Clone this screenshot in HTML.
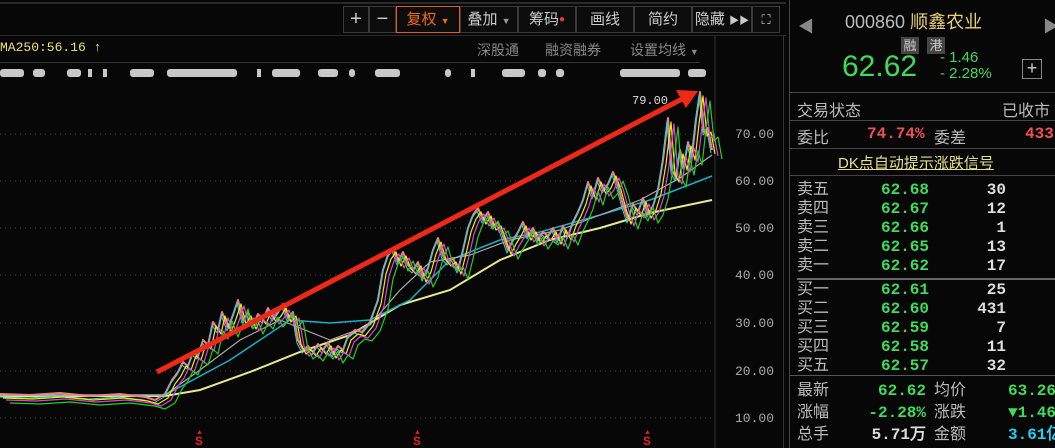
<!DOCTYPE html>
<html><head><meta charset="utf-8"><style>
*{margin:0;padding:0;box-sizing:border-box}
body{width:1055px;height:448px;background:#070707;overflow:hidden;position:relative;font-family:"Liberation Sans","Noto Sans CJK SC",sans-serif;color:#ccc}
.a{position:absolute;white-space:nowrap}
.btn{position:absolute;top:6px;height:27px;border:1px solid #3a3a3a;color:#ccc;font-size:15px;line-height:25px;text-align:center;background:#0c0c0c}
.r{position:absolute;left:797px;font-size:16px;color:#bbb}
.g{color:#3ddc5a;font-family:"Liberation Mono",monospace;font-weight:bold;font-size:16px}
.n{color:#ddd;font-family:"Liberation Mono",monospace;font-weight:bold;font-size:16px}
.ax{position:absolute;left:735px;color:#aaa;font-family:"Liberation Mono",monospace;font-size:13px}
</style></head><body>
<div class="a" style="left:0;top:2px;width:786px;height:2px;background:#2a2a2a"></div>
<div class="btn" style="left:343px;width:26px;font-size:20px">+</div>
<div class="btn" style="left:369px;width:27px;font-size:20px">−</div>
<div class="btn" style="left:396px;width:64px;border-color:#e06010;color:#f06a10">复权 <span style="font-size:9px">▼</span></div>
<div class="btn" style="left:460px;width:58px">叠加 <span style="font-size:9px;color:#999">▼</span></div>
<div class="btn" style="left:518px;width:58px">筹码<span style="color:#f33;font-size:10px;vertical-align:top">●</span></div>
<div class="btn" style="left:576px;width:58px">画线</div>
<div class="btn" style="left:634px;width:58px">简约</div>
<div class="btn" style="left:692px;width:60px">隐藏 <span style="font-size:10px">▶▶</span></div>
<div class="btn" style="left:752px;width:28px;font-size:13px">⛶</div>
<div class="a" style="left:0;top:35px;width:786px;height:1px;background:#2a2a2a"></div>
<div class="a" style="left:0;top:40px;font-family:'Liberation Mono',monospace;font-size:13px;color:#f0e070">MA250:56.16 <span>↑</span></div>
<div class="a" style="left:477px;top:40px;font-size:14px;color:#888">深股通</div>
<div class="a" style="left:545px;top:40px;font-size:14px;color:#888">融资融券</div>
<div class="a" style="left:630px;top:40px;font-size:14px;color:#888">设置均线 <span style="font-size:9px">▼</span></div>
<div class="a" style="left:0;top:62px;width:700px;height:1px;background:#333"></div>
<div class="a" style="left:783px;top:36px;width:1px;height:412px;background:#333"></div>
<div class="a" style="left:789px;top:0;width:1px;height:448px;background:#444"></div>
<svg class="a" style="left:0;top:0" width="790" height="448">
<defs>
<polyline id="p" points="0,394 30,395 60,393 90,396 120,394 145,397 155,400 165,394 172,380 178,372 183,362 188,366 193,352 198,356 203,340 208,345 213,322 218,330 222,312 228,328 233,315 238,300 243,320 248,312 253,325 258,314 263,320 268,308 273,318 278,312 283,304 288,318 293,312 298,340 303,350 308,346 313,352 318,344 323,350 328,342 333,354 338,346 343,350 348,336 355,330 362,332 370,322 378,300 383,270 388,255 393,248 398,262 403,252 408,265 413,270 418,262 423,278 428,268 433,250 438,238 443,256 448,262 453,258 458,270 463,250 468,228 473,215 478,208 483,220 488,212 493,226 498,222 503,236 508,250 513,240 518,232 523,222 528,236 533,228 538,240 543,232 548,236 553,228 558,240 563,226 568,236 573,222 578,212 583,200 588,182 593,196 598,178 603,190 608,184 613,172 618,186 623,205 628,220 633,204 638,212 643,198 648,214 653,206 658,190 663,160 668,118 672,170 676,178 680,150 684,166 688,142 692,156 696,120 700,92 704,132 708,128 712,150"/>
</defs>
<g fill="#c8c8c8">
<rect x="0" y="69" width="24" height="8" rx="3"/><rect x="33" y="69" width="12" height="8" rx="3"/><rect x="67" y="69" width="14" height="8" rx="3"/><rect x="88" y="69" width="4" height="8"/><rect x="103" y="69" width="4" height="8"/><rect x="130" y="69" width="24" height="8" rx="3"/><rect x="167" y="69" width="70" height="8" rx="3"/><rect x="257" y="69" width="4" height="8"/><rect x="272" y="69" width="28" height="8" rx="3"/><rect x="318" y="69" width="20" height="8" rx="3"/><rect x="349" y="69" width="6" height="8" rx="3"/><rect x="375" y="69" width="25" height="8" rx="3"/><rect x="445" y="69" width="6" height="8" rx="3"/><rect x="471" y="69" width="4" height="8"/><rect x="502" y="69" width="23" height="8" rx="3"/><rect x="538" y="69" width="8" height="8" rx="3"/><rect x="556" y="69" width="8" height="8" rx="3"/><rect x="620" y="69" width="60" height="8" rx="3"/><rect x="688" y="69" width="18" height="8" rx="3"/>
</g>
<g stroke="#444" stroke-dasharray="1,4">
<line x1="0" y1="134" x2="715" y2="134"/><line x1="0" y1="181" x2="715" y2="181"/><line x1="0" y1="228" x2="715" y2="228"/><line x1="0" y1="275" x2="715" y2="275"/><line x1="0" y1="323" x2="715" y2="323"/><line x1="0" y1="371" x2="715" y2="371"/><line x1="0" y1="418" x2="715" y2="418"/>
</g>
<line x1="715" y1="36" x2="715" y2="448" stroke="#333"/>
<polyline fill="none" stroke="#e8e890" stroke-width="2" points="0,396 165,396 200,390 250,372 300,352 350,335 400,305 450,290 500,260 550,240 600,228 650,213 712,200"/>
<polyline fill="none" stroke="#1ab0c8" stroke-width="1.5" points="0,395 165,395 230,360 290,320 330,323 370,320 410,300 450,260 500,240 540,232 600,215 650,200 712,176"/>
<polyline fill="none" stroke="#aaa" stroke-width="1.2" points="0,395 165,395 200,370 240,340 280,320 330,340 370,325 400,290 430,262 470,255 510,240 560,230 600,215 640,200 680,178 712,155"/>
<g fill="none" stroke-linejoin="round">
<use href="#p" stroke="#f08080" stroke-width="2"/>
<use href="#p" stroke="#20d8e8" stroke-width="1" transform="translate(-1,3)"/>
<use href="#p" stroke="#f0f000" stroke-width="1.2" transform="translate(3,4)"/>
<use href="#p" stroke="#e040e0" stroke-width="1.2" transform="translate(6,6)"/>
<use href="#p" stroke="#20d020" stroke-width="1.2" transform="translate(10,9)"/>
</g>
<line x1="157" y1="372" x2="684" y2="98" stroke="#f02818" stroke-width="5"/>
<polygon points="698,91 676,90 686,108" fill="#f02818"/>
<text x="632" y="104" fill="#ddd" font-family="Liberation Mono,monospace" font-size="12">79.00</text>
<g fill="#e02020" font-family="Liberation Mono,monospace" font-size="13" font-weight="bold"><text x="195" y="445">S</text><text x="413" y="445">S</text><text x="643" y="445">S</text></g>
<g fill="#e02020" font-size="7"><text x="196" y="434">▲</text><text x="414" y="434">▲</text><text x="644" y="434">▲</text></g>
</svg>
<div class="ax" style="top:127px">70.00</div><div class="ax" style="top:174px">60.00</div><div class="ax" style="top:221px">50.00</div><div class="ax" style="top:268px">40.00</div><div class="ax" style="top:316px">30.00</div><div class="ax" style="top:364px">20.00</div><div class="ax" style="top:411px">10.00</div>
<div class="a" style="left:798px;top:13px;font-size:16px;color:#888">◀</div>
<div class="a" style="left:1043px;top:13px;font-size:16px;color:#888">▶</div>
<div class="a" style="left:845px;top:8px;font-size:18px;color:#bbb">000860 <span style="color:#e8d070">顺鑫农业</span></div>
<div class="a" style="left:901px;top:37px;width:18px;height:17px;background:#444;font-size:13px;color:#ccc;text-align:center;line-height:17px">融</div>
<div class="a" style="left:927px;top:37px;width:18px;height:17px;background:#444;font-size:13px;color:#ccc;text-align:center;line-height:17px">港</div>
<div class="a" style="left:842px;top:50px;font-size:30px;color:#3ddc5a">62.62</div>
<div class="a" style="left:940px;top:50px;font-size:15px;color:#3ddc5a;line-height:16px">- 1.46<br>- 2.28%</div>
<div class="a" style="left:1022px;top:59px;width:20px;height:20px;border:1px solid #888;color:#ccc;font-size:18px;line-height:17px;text-align:center">+</div>
<div class="a" style="left:790px;top:92px;width:265px;height:1px;background:#444"></div>
<div class="r" style="top:97px">交易状态</div><div class="a" style="left:1002px;top:97px;font-size:16px;color:#bbb">已收市</div>
<div class="a" style="left:790px;top:120px;width:265px;height:1px;background:#444"></div>
<div class="r" style="top:124px">委比</div><div class="a g" style="left:867px;top:125px;color:#f05050">74.74%</div><div class="r" style="left:934px;top:124px">委差</div><div class="a g" style="left:1025px;top:125px;color:#f05050">433</div>
<div class="a" style="left:790px;top:148px;width:265px;height:1px;background:#444"></div>
<div class="a" style="left:838px;top:152px;font-size:15px;color:#e8e090;text-decoration:underline">DK点自动提示涨跌信号</div>
<div class="a" style="left:790px;top:175px;width:265px;height:1px;background:#444"></div>
<div class="r" style="top:180px;line-height:19px">卖五<br>卖四<br>卖三<br>卖二<br>卖一</div>
<div class="a g" style="left:881px;top:181px;line-height:19px">62.68<br>62.67<br>62.66<br>62.65<br>62.62</div>
<div class="a n" style="left:960px;top:181px;line-height:19px;width:46px;text-align:right">30<br>12<br>1<br>13<br>17</div>
<div class="a" style="left:797px;top:278px;width:258px;height:2px;background:#666"></div>
<div class="r" style="top:280px;line-height:19px">买一<br>买二<br>买三<br>买四<br>买五</div>
<div class="a g" style="left:881px;top:281px;line-height:19px">62.61<br>62.60<br>62.59<br>62.58<br>62.57</div>
<div class="a n" style="left:960px;top:281px;line-height:19px;width:46px;text-align:right">25<br>431<br>7<br>11<br>32</div>
<div class="a" style="left:790px;top:375px;width:265px;height:1px;background:#555"></div>
<div class="r" style="top:380px;line-height:22px">最新<br>涨幅<br>总手</div>
<div class="a g" style="left:866px;top:380px;line-height:22px;width:60px;text-align:right">62.62<br>-2.28%<br><span style="color:#ddd">5.71万</span></div>
<div class="r" style="left:934px;top:380px;line-height:22px">均价<br>涨跌<br>金额</div>
<div class="a g" style="left:1008px;top:380px;line-height:22px">63.26<br>▼1.46<br><span style="color:#20d0f0">3.61亿</span></div>
</body></html>
